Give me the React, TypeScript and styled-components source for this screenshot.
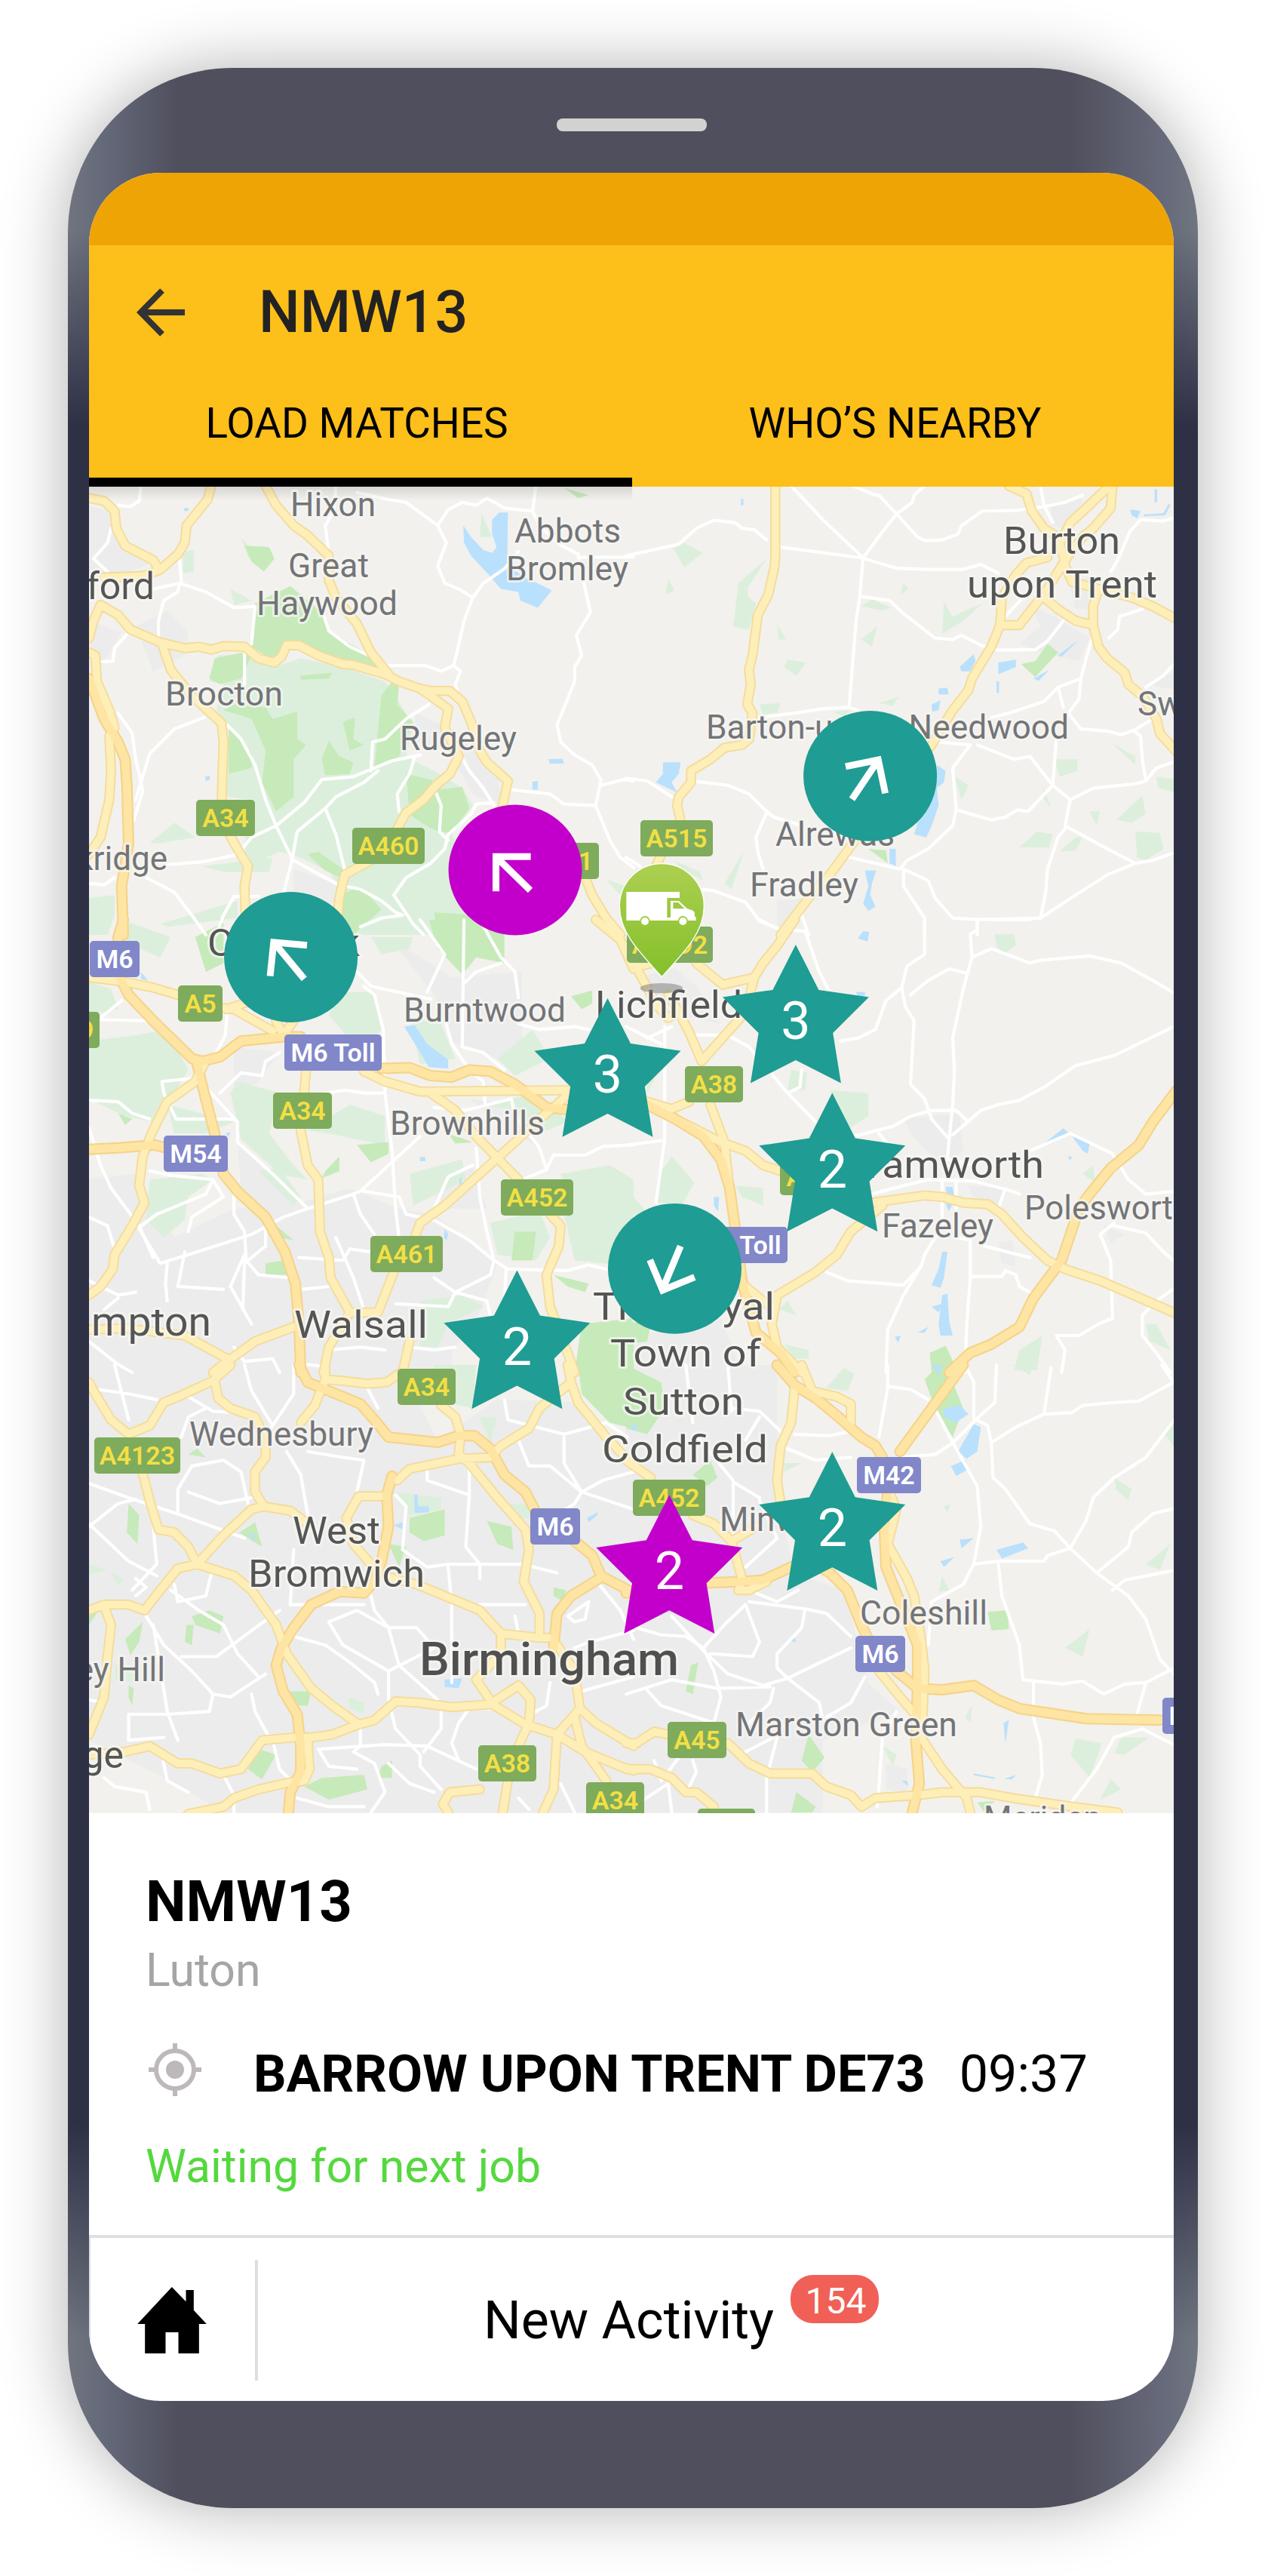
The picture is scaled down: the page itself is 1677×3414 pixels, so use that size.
import React from 'react';
import styled, { createGlobalStyle } from 'styled-components';

const GlobalStyle = createGlobalStyle`
  * { box-sizing: border-box; }
  body { margin: 0; background: #fff; font-family: Roboto, "Noto Sans", sans-serif; }
`;

/* ---------- device ---------- */

const Page = styled.div`
  display: flex;
  align-items: flex-start;
  width: 1677px;
  height: 3414px;
  padding: 90px 0 0 90px;
  overflow: hidden;
`;

const Phone = styled.div`
  display: flex;
  flex-direction: column;
  align-items: center;
  width: 1498px;
  height: 3234px;
  border-radius: 218px;
  background:
    linear-gradient(to bottom, rgba(46, 48, 69, 0) 215px, #2e3045 475px, #2e3045 calc(100% - 510px), rgba(46, 48, 69, 0) calc(100% - 225px)),
    linear-gradient(to right, #70757f 0, #646979 50px, #504f5d 145px, #504f5d calc(100% - 170px), #676a7a calc(100% - 45px), #6f7680 100%);
  box-shadow: 0 0 88px rgba(0, 0, 0, 0.31);
`;

const Speaker = styled.div`
  width: 199px;
  height: 17px;
  margin: 67px 4px 55px 0;
  border-radius: 8px;
  background: #d2d2d2;
  flex: none;
`;

const Screen = styled.div`
  display: flex;
  flex-direction: column;
  width: 1438px;
  height: 2953px;
  margin-right: 4px;
  border-radius: 95px;
  overflow: hidden;
  background: #fff;
`;

/* ---------- header ---------- */

const StatusBar = styled.div`
  height: 96px;
  background: #eea404;
  flex: none;
`;

const AppBar = styled.header`
  display: flex;
  align-items: center;
  height: 178px;
  padding-left: 63px;
  gap: 98px;
  background: #fdbf19;
  flex: none;
`;

const Title = styled.h1`
  margin: 0;
  font-size: 77px;
  line-height: 90px;
  font-weight: 500;
  color: #222;
`;

const Tabs = styled.nav`
  display: grid;
  grid-template-columns: 720px 718px;
  height: 142px;
  background: #fdbf19;
  flex: none;
`;

const Tab = styled.div<{ $active?: boolean }>`
  display: flex;
  align-items: center;
  justify-content: center;
  padding: 0 ${p => (p.$active ? 10 : 21)}px 14px 0;
  border-bottom: 12px solid ${p => (p.$active ? '#000' : '#fdbf19')};
  font-size: 54.8px;
  line-height: 64px;
  color: #000;
`;

/* ---------- map ---------- */

const MapView = styled.div`
  height: 1758px;
  flex: none;
  background: #f2f1ed;
`;

type Tile = {
  x: number; y: number;
  urban: string; park: string; wood: string; water: string;
  lane: string; main: string; motor: string;
};

const SX = 0.46556;
const SY = 0.38265;

const TILES: Tile[] = [
  {
    x: -8, y: -6,
    urban: '17,80 90,110 130,230 200,280 100,320 17,330|150,500 240,445 300,520 290,600 200,655|945,800 1040,850 1180,1000 1190,1120 1110,1080 1040,930 950,900|20,480 110,520 50,640 20,640|600,1340 720,1390 730,1440 660,1500 600,1430',
    park: '385,600 480,595 545,640 620,610 740,640 860,690 900,760 940,850 920,950 1000,1000 1080,1060 1110,1120 1050,1220 1130,1450 1130,1568 770,1568 730,1400 700,1350 620,1300 560,1280 470,1330 460,1250 480,1100 410,1090 415,850 380,790 400,700 360,690|285,240 315,235 315,310 285,315|1490,1375 1568,1410 1568,1430 1530,1430|190,1250 260,1180 320,1230 220,1250|340,1330 540,1300 530,1350 400,1350|17,1440 90,1430 90,1500 70,1568 17,1568|220,1530 440,1450 440,1510 240,1540|1135,110 1165,190 1130,190|450,195 480,230 475,270|420,370 480,410 430,425',
    wood: '490,420 590,360 680,450 700,520 820,600 850,640 740,625 620,560 570,565 545,620 480,570|375,610 455,590 480,600 450,680 390,700 360,680|400,790 430,770 520,780 540,820 610,795 610,890 635,910 600,960 600,1090 550,1140 510,1040 520,930 480,820|415,840 480,940 480,990 415,1010|740,830 775,815 770,890 800,910 760,930|700,895 730,950 770,970 760,1010 690,1015 680,960|850,740 880,690 900,700 895,770 940,830 900,950 830,990 840,860|920,1010 990,1030 1020,1065 1080,1055 1100,1130 1050,1215 1010,1210 970,1185 930,1150|640,1290 670,1280 740,1340 735,1370 690,1345|730,1430 790,1400 850,1480 770,1568 730,1568|1000,1490 1130,1500 1130,1568 1010,1568|460,220 530,225 545,265 515,310 480,275|1370,20 1440,45 1410,55|620,670 710,660 700,680 620,685',
    water: '1083,150 1105,190 1140,235 1165,245 1178,225 1165,180 1165,130 1185,105 1210,105 1208,290 1260,330 1335,375 1295,435 1245,410 1240,380 1190,370 1155,320 1105,255 1085,210|1325,960 1365,958 1370,975 1330,975|1280,1038 1295,1035 1295,1065 1280,1065|288,90 300,90 300,100 288,100|348,1020 362,1018 360,1032 350,1034',
    lane: '165,13 160,65 135,85 100,80|80,160 70,210 30,265 70,310|280,345 275,270|200,370 275,350 350,380 430,435 490,430 480,560|275,350 270,380 230,410 215,480 215,550|130,520 90,575 85,620 55,622|720,13 715,100 690,150 700,250|780,35 870,60 920,70 1010,150 1035,210 1010,290 1030,350 1070,370 1110,400|1010,150 1040,95 1080,70 1120,80 1150,55 1200,90 1280,100 1290,13|1280,100 1300,150 1350,210 1410,250 1430,370 1445,450 1405,530 1420,600 1400,640 1400,690 1370,780 1350,840 1360,900 1400,945 1450,980 1475,1030 1460,1120|1410,260 1568,260|1240,240 1200,300 1140,350 1110,400 1085,480 1065,590 1055,635 1020,655 975,635 870,635|1055,635 1075,655 1060,700 1065,720|680,440 700,515 760,570 850,620|460,590 460,700|345,815 260,855 190,940 150,1100|100,800 140,870 150,960 160,1010 170,1070 145,1170|410,840 450,890 490,980 520,1100 550,1190 590,1290 600,1310 720,1390|985,770 920,820 860,890 825,900 820,1000|960,945 880,965 770,1020 680,1030 630,1110 550,1190 480,1230 440,1290 340,1315 240,1325|840,1000 800,1040 720,1090 690,1130 610,1210 595,1310 570,1430|690,1130 720,1220 745,1340|945,950 930,1010 895,1080 900,1140|1075,945 1100,1000 1140,1060 1170,1120|1215,1065 1330,1080 1370,1115 1460,1120 1500,1240 1530,1300 1568,1335|1475,1050 1540,1030 1568,1035|1005,1075 1020,1120 1015,1210 1040,1240|1170,1110 1120,1115 1105,1150 1040,1220 1030,1270 990,1320 920,1370 885,1430 940,1530 970,1568|180,1370 260,1420 310,1500 350,1568|430,1435 500,1435|430,1435 400,1500 380,1568|750,1400 790,1410 850,1450 890,1490 910,1500 850,1510 790,1540|20,1390 60,1395 90,1370',
    main: '17,55 60,65 90,100 95,160 120,220 200,270 218,305|365,13 355,60 295,150 290,210 270,250 218,305 170,325 60,330|520,13 550,80 600,150 640,185 700,255 700,340 720,400 780,490 820,590 870,665|17,540 30,480 50,425 100,460 135,510 220,555 290,575 330,570 365,580 400,568 460,570 500,610 545,625 565,605 580,565 615,565 670,600 740,630 770,633 860,665 900,690 960,715 990,740 1040,785 1030,850 1070,950 1045,1010 1005,1050 970,1100 920,1145 895,1200 850,1290 745,1360 730,1440 725,1500|960,715 990,723 1045,723 1080,760 1105,830 1130,930 1150,970 1210,1035 1195,1120|225,560 250,650 310,740 395,835 400,900 395,1100 400,1180 430,1250 470,1330 460,1400 465,1568|17,590 35,600 40,690 75,790 90,850 75,880 80,1000 75,1100 50,1230 17,1290|1430,1370 1450,1430 1490,1510 1530,1568',
    motor: '17,680 60,820 100,900 120,960 125,1050 130,1250 110,1400 115,1568',
  },
  {
    x: 712, y: -6,
    urban: '1210,80 1290,50 1310,90 1250,160 1210,150|1150,420 1240,480 1320,540 1290,620 1220,600 1120,560 1180,500|1480,700 1568,650 1568,720|1260,340 1330,330 1330,440 1280,440|430,1450 520,1440 470,1568 430,1568',
    park: '135,230 165,210 218,245 165,295|120,335 138,375 112,390|400,265 345,370 350,400 370,420 350,510 305,500 320,350|430,490 455,545 435,545|450,640 460,615 512,625 485,670|670,430 700,405 755,435 730,445|670,545 715,500 700,570|790,350 805,370 780,390|905,415 930,465 1015,420 960,480 900,525|720,765 775,745 760,775|380,770 440,765 430,800 390,805|1220,960 1285,960 1285,1000 1235,1020|935,1020 975,1050 955,1100|1385,905 1450,950 1450,980|1320,1140 1350,1140 1340,1190|1395,1170 1470,1085 1480,1150 1440,1180|1450,1210 1520,1215 1530,1270 1480,1310 1455,1300|1120,1265 1170,1210 1215,1220 1205,1265|1235,1280 1280,1230 1300,1230 1280,1275|1510,1020 1568,1030 1568,1075 1515,1060|335,1280 300,1410 280,1390|135,1310 210,1350 220,1380 160,1340|1190,1060 1210,1130 1185,1090|590,795 640,790 620,810',
    wood: '1125,630 1165,620 1200,560 1230,590 1165,675|690,1270 740,1275 745,1320',
    water: '105,970 155,970 150,1010 130,1040 145,1075 85,1040 105,1010|950,640 990,595 995,620 980,655 955,655|1060,625 1110,615 1110,640 1060,665|890,715 915,712 918,735 890,735|870,770 895,755 890,790 872,795|885,980 910,1000 905,1040 885,1060 890,1120 870,1190 855,1230 820,1220 830,1180 870,1080|750,1270 768,1270 768,1330 750,1320|680,1345 712,1345 700,1390 695,1430 710,1470 690,1485 675,1460 690,1400|1435,95 1465,100 1455,125 1440,115|1475,112 1530,108 1545,75 1550,80 1535,115 1475,118|1055,690 1062,690 1062,730 1055,730|327,58 334,58 334,80 327,80|1505,25 1512,25 1512,70 1505,70|1160,680 1205,650 1175,688|1230,600 1290,545 1240,605',
    lane: '0,255 150,215 200,160 250,132 310,140 330,160 365,165 400,200|440,225 670,262 770,298 860,302 960,302 1010,285 1060,315|470,13 560,130 675,262 725,180 770,110 815,70 820,45 850,13|645,13 710,45 720,45 770,110 830,190 850,202 900,200 945,180 955,150 1015,100 1110,98 1190,85 1250,70 1300,45|675,262 665,400 655,480 635,780|665,395 750,410 790,455 880,540 930,545 955,530 1010,565 1060,582 1165,580 1200,550 1245,480|380,815 480,800 560,785 635,780 660,790|1180,13 1190,80 1215,140|1568,120 1530,135 1465,130 1435,170 1400,270 1380,310|1470,440 1405,465 1400,510 1375,540|1330,530 1310,610 1295,680 1230,710 1190,760 1090,800 1040,815|1295,680 1290,750 1260,800 1295,855 1370,862 1410,875 1445,860 1500,820|1230,710 1245,780|1568,620 1530,670 1480,710|1225,890 1215,1050 1145,1140 1115,1135 1080,1160 1040,1170 940,1135 930,990 980,910 890,900|1000,910 1105,960 1150,950 1215,1050 1265,1100 1250,1190 1370,1270 1450,1320 1500,1310 1568,1280|1265,1100 1330,1060 1450,1045 1480,1035 1470,960 1465,880 1445,860|1480,1035 1510,990 1568,965|940,1135 930,1190 860,1270 800,1310 780,1340 620,1295|1250,1200 1230,1230 1200,1340 1195,1420 1180,1510 1000,1515 930,1510 880,1440 860,1380 790,1340 790,1400 850,1510 850,1568|1450,1320 1370,1360 1280,1430 1180,1510|1000,1515 1000,1568|0,1025 60,1035 130,1090|190,1035 290,1050 350,1080 400,1140 420,1160 500,1190|400,1145 370,1230 375,1280 390,1340|0,1300 40,1330|210,1410 250,1415 340,1455 380,1520 460,1560|1060,490 1130,400|500,1500 520,1568',
    main: '425,13 425,250 423,290 405,390 375,460 360,600 350,650 355,700 345,770 360,800 350,890 330,910 280,920 240,960 185,1000 185,1040 150,1090 145,1120 155,1170|100,1290 85,1330|1090,13 1140,40 1155,100 1190,160 1230,190 1250,280|1370,20 1310,90 1265,140 1240,200|1385,13 1380,90 1330,160 1300,190 1250,270 1200,370 1120,495 1065,495|1200,260 1140,280 1110,320 1070,400 1065,495 1040,570 1015,620 985,680 975,720 930,790 870,910 640,1260 580,1360 520,1440 440,1568|1190,400 1230,440 1280,480 1330,495 1330,430 1345,370|1250,290 1270,345 1345,370 1440,400 1500,430 1568,475|1330,495 1345,570 1370,610 1420,660 1430,700 1470,740 1510,820 1520,870 1568,935',
    motor: '',
  },
  {
    x: -8, y: 574,
    urban: '17,900 150,880 260,1100 430,1000 620,980 760,930 900,1000 1000,1020 1180,1190 1130,1360 1050,1500 1050,1568 17,1568|870,60 1050,200 1250,180 1250,480 1170,480 1050,420 1000,260|1100,620 1230,640 1300,790 1180,700|430,440 560,460 500,560 430,620|620,0 760,200 700,60|440,760 620,980 560,1040 450,940|990,880 1110,860 1150,1000 1010,1000',
    park: '17,420 150,400 240,380 300,520 240,640 200,700 120,680 17,620|17,215 80,240 100,310 17,330|110,0 250,60 220,130 120,80|240,640 430,700 350,740 260,740|190,900 340,880 370,900 300,960 290,1040 230,1100 180,1040|440,560 560,600 530,740 600,850 640,900 560,880 450,760 420,600|640,730 760,640 860,680 860,780 700,740|730,250 830,250 850,380 790,460 700,330|930,340 1020,360 1060,480 960,500|1180,480 1280,380 1330,480 1230,540|1130,640 1300,600 1380,700 1300,740 1230,660|930,880 1080,830 1090,900 940,990|1360,880 1500,850 1568,900 1568,1200 1400,1180 1370,1020 1400,1010|1160,1050 1300,1010 1330,1100 1290,1180 1180,1160|960,1320 1080,1300 1140,1340 1040,1400 1010,1480 960,1480|820,60 940,60 930,100 850,120|770,0 960,0 900,20 800,40|1240,1400 1310,1390 1340,1568 1240,1568|500,870 560,860 620,960 600,990',
    wood: '320,60 400,10 400,150 350,180|985,0 1200,0 1200,150 1120,130 1080,190 1010,100|780,780 870,770 870,810 820,840|690,870 730,820 730,870 680,895|520,1190 570,1180 580,1230 520,1230|1390,265 1450,245 1450,290 1420,310|550,1060 600,1110 560,1100|1230,1080 1290,1080 1280,1180 1220,1180|1420,1400 1568,1380 1568,1568 1400,1568|100,670 140,690 120,710|1040,740 1110,770 1060,775|1340,1230 1440,1260 1430,1290 1380,1270',
    water: '915,370 945,365 980,430 1040,485 1040,515 985,510 950,440|960,822 975,822 975,836 960,836|1030,1070 1040,1090 1035,1110 1028,1100|165,180 185,210 165,205|405,740 420,735 415,752|1072,895 1078,895 1078,920 1072,920',
    lane: '410,330 405,400 380,460|17,625 100,630 140,670 190,690|17,345 190,350 240,380|50,340 110,280|350,580 440,700 440,770 540,880 640,1000|560,460 520,490 510,540 450,530 390,600|310,550 225,560 230,600 265,690 430,690|690,600 750,590 800,600 860,600|800,230 830,260 855,380 860,600 880,800 890,1000 900,1100|780,180 820,230 990,275|960,0 1030,120 980,250|1085,0 1080,440 1140,460 1200,520|1130,0 1190,130 1230,180 1240,270|1190,150 1120,180 1085,220|1030,340 1050,430 1100,520 1140,560 1145,640|1000,650 1090,660 1220,620 1230,680 1300,790 1320,865 1340,815 1430,815 1480,785 1568,780|1320,865 1250,900|960,750 790,940 770,950 640,1000 570,1030 480,1090 300,1160 220,1190 160,1070|800,940 900,960 920,1020 1000,1040 1100,1110 1170,1180 1210,1210 1380,1215 1440,1195 1490,1210|770,950 790,1020 830,1090|1120,790 1130,960 1150,1080 1170,1180 1160,1230 1060,1290 1000,1240|1110,850 1040,890 1000,1000|1205,1210 1200,1320|1060,1290 1150,1320 1160,1370|17,720 50,850 80,930 160,1060 200,1170|160,1065 210,1020 350,950 370,900 250,885 190,870|370,900 400,960 310,1030 300,1080|430,920 430,1020 460,1080 465,1180 500,1230 590,1240|17,1030 70,1060 90,1140|460,1160 420,1270 480,1400|460,1180 455,1350|520,1050 520,1130 460,1190|240,1190 235,1260 240,1320|17,1250 100,1300 150,1290|100,1310 60,1350|290,1150 270,1270 400,1280|615,1170 740,1180 760,1140 820,1150|720,1100 770,1240 800,1350|620,1280 700,1270|1060,1290 1040,1340 890,1330|17,1460 100,1540 140,1568|430,1480 460,1530 540,1520 560,1568|700,1490 790,1480 860,1490|640,1540 700,1550|930,1480 1000,1490 1060,1480|1240,360 1300,380 1400,370 1440,380',
    main: '20,200 120,215 200,235 270,260|395,305 430,310 540,385|410,310 500,270|550,350 570,400 600,350|345,500 320,560 240,630 195,740 170,820 160,920 175,980 140,1060 90,1160 85,1210 50,1270 17,1300|635,520 630,600 620,730 640,850 670,900 675,1080 700,1170 705,1240 760,1360|990,600 1060,660 1120,750 1180,825 1240,900|1400,580 1350,640 1300,690 1230,770 1180,825 1030,990 960,1050 945,1100|885,1220 840,1360 760,1360 700,1480 685,1568|1330,1020 1360,1060 1355,1130 1320,1230 1330,1340 1380,1500 1400,1568|600,1410 490,1460 410,1530 370,1568|410,1520 290,1440 120,1415 17,1420|930,1460 910,1568|1460,0 1530,70 1568,170|800,525 860,560 960,595 1400,590|465,0 465,60',
    motor: '115,0 100,60 105,200 130,260 200,350 310,480 340,490 390,475 450,420 575,405 620,405|325,500 345,600 375,740 400,880 440,940 520,1030 575,1150 605,1260 615,1400 620,1568|17,795 100,790 205,780 235,790|850,515 930,512 990,540 1050,545 1100,520 1160,525 1230,570 1320,650 1400,660 1568,600',
  },
  {
    x: 712, y: 574,
    urban: '790,690 950,670 960,800 900,860 810,740|60,190 140,170 200,230 270,360 150,330 60,220|1060,1120 1100,1110 1110,1200 1070,1190|0,1450 270,1380 330,1568 0,1568|970,920 1080,930 1060,1010 990,960|1360,1060 1420,1090 1380,1120',
    park: '1050,50 1105,50 1110,90 1080,115 1055,95|580,590 690,600 690,680 640,720 590,650|100,870 130,820 195,910 160,985 90,980|310,920 390,930 390,990 330,960|470,520 515,530 510,590 460,590|435,1350 460,1320 485,1370|450,1470 520,1490 520,1520 480,1520|1105,1560 1120,1490 1185,1440 1170,1560|1480,1400 1510,1400 1550,1490 1490,1460|1300,880 1330,850 1335,910|0,930 50,1000 50,1050 0,1000|60,500 90,530 60,600|350,440 380,450 370,480',
    wood: '865,1500 910,1475 935,1540 930,1568 870,1568|0,1390 70,1400 60,1460 0,1470',
    water: '660,65 675,40 692,42 688,75|655,250 680,250 680,270 660,270|1195,770 1245,722 1265,745 1210,775|1270,750 1320,770 1315,810 1300,800|900,1150 915,1150 905,1240 895,1275 870,1265 890,1210|900,1300 915,1295 920,1390 930,1440 895,1440 890,1400|870,1340 900,1330 890,1360|830,1430 860,1410 850,1430|910,925 930,925 935,975 915,975|250,960 265,960 262,1010 250,990|765,1445 782,1440 775,1465|910,980 930,985 918,1010|1258,820 1270,820 1264,835',
    lane: '850,0 850,120 800,160 785,235 740,280 710,380 660,410 610,420|785,235 795,300 820,350 810,570 850,620 870,690 920,760 930,640 935,520 930,410 960,240 985,130 980,50 1000,35 1000,0|970,185 920,170 860,210 810,260|985,130 1040,100 1150,150 1180,140 1320,125 1410,150 1500,210 1568,260|1568,365 1390,470 1280,505 1190,580 1120,625 1060,640 1010,660 930,745|650,750 760,715 810,680 870,660 940,660 970,695|920,760 915,830 990,850|700,950 760,930 860,900 990,905 1100,940 1120,950|1080,930 1060,1000|900,900 900,1060 850,1160 840,1200 790,1300 745,1420 740,1568|980,1110 980,1240 970,1400 965,1568|980,1235 1070,1235 1080,1215 1110,1230 1120,1270 1150,1290|1150,800 1265,740 1385,810 1430,900 1480,950 1568,940|1390,1050 1350,1090 1380,1180 1385,1380 1345,1400 1290,1440 1225,1440 1250,1490 1240,1568|1390,1060 1480,1085 1530,1150 1568,1190|1568,1270 1510,1320 1470,1370 1470,1440 1510,1500 1550,1568|570,1220 630,1250 790,1265 840,1200|190,398 290,400 350,440 460,600 540,700|380,0 430,30 510,40 550,180 575,240|110,370 110,760 85,980|0,370 100,430|130,370 60,410|0,780 100,765|500,520 495,580 460,600|1040,0 1150,0|940,900 940,1100 980,1110|1020,1130 1150,1170|720,740 760,800',
    main: '480,0 430,90 390,150 365,200 275,225 200,150|365,200 340,320 215,490 180,390 150,320 120,340 90,300 40,190 0,90|20,165 75,150|60,630 130,655 180,630|240,640 280,770 295,940 310,1060 325,1100|60,640 270,770 340,800 390,850 440,870|700,980 760,970 850,955 900,960 960,980 1030,985 1070,1020 1130,1100 1200,1180 1250,1210 1350,1250 1568,1365|730,990 640,1080 600,1160 540,1220 430,1300 415,1400 430,1480 500,1568|340,1270 420,1350|150,320 120,260',
    motor: '0,600 60,640 140,690 220,750 270,830 295,930 310,1060 330,1250 345,1320 370,1430 440,1500 480,1568|1568,590 1500,700 1460,780 1380,860 1320,950 1290,1000 1240,1180 1160,1310 1120,1410 1040,1470 980,1500 920,1568',
  },
  {
    x: -8, y: 1164,
    urban: '17,0 900,0 1010,260 1180,120 1420,130 1568,350 1568,1550 400,1550 250,1440 17,1300',
    park: '1000,0 1120,0 1110,150 1000,120|880,440 1020,460 1020,500 930,520|755,1150 800,1170 800,1210 760,1190|1130,180 1180,180 1160,270|17,690 70,710 17,725|80,720 115,740 100,765|90,1040 150,1040 150,1100 90,1090|1210,480 1270,480 1280,530 1230,530',
    wood: '930,530 1030,500 1030,590 970,610 930,580|1150,540 1220,560 1225,640 1180,620|445,580 490,545 510,630|130,480 160,520 155,620 125,580|310,870 360,850 400,870 390,930 320,900|295,900 315,900 310,970 290,960|120,950 170,890 160,960 135,1005|870,620 920,630 900,700|590,1130 650,1130 640,1180 600,1180|630,1460 680,1430 800,1420 810,1470 700,1505|850,1390 880,1370 880,1430 840,1430|470,1400 500,1330 550,1350 510,1435|300,310 325,290 350,320|1340,770 1375,780 1370,820 1340,800|1410,0 1568,0 1568,220 1500,200 1420,100|17,850 45,850 17,900|130,1110 145,1120 140,1180 130,1150',
    water: '943,448 952,448 955,490 985,490 985,510 945,512|1030,1090 1080,1085 1070,1120 1030,1115|885,555 910,545 910,570|1435,530 1465,510 1465,520 1440,545|470,580 490,590 485,610',
    lane: '17,80 130,100 210,120|90,0 130,190|300,110 370,160 430,165|350,150 300,180 280,250|460,0 480,90 540,210|600,0 600,100 540,210 510,260|580,300 620,380 640,520|640,300 740,320 800,330 780,440|17,410 130,460 280,520 460,600|17,560 100,480 150,465|270,510 270,430 310,350 400,330 450,370 470,480|17,550 130,680 210,730|300,440 390,480 480,460|810,80 840,150|1200,120 1210,190 1370,240 1490,200 1550,250|1370,250 1370,340 1420,440 1400,480 1300,560|1240,260 1270,350 1330,350 1420,440 1568,500|1420,440 1480,400 1568,370|980,350 980,400 1100,450 1090,630 1130,690 1130,740|1100,340 1100,450|890,450 920,490 910,640 980,700 1040,690 1250,690 1350,720|1040,700 1050,830 1050,1100|640,850 600,940 690,970 760,1030 830,1100 840,1140|700,890 780,850 870,910 950,910 1000,980 870,1060 870,1160|700,890 740,970 870,1060|820,800 830,850 870,910 900,1040 1010,1160|560,850 480,920 380,1010 280,1010|250,780 330,850 400,900 440,1000 500,1080|180,870 230,970 310,1060 370,1140 420,1150 520,1070|370,1140 360,1200 240,1210 130,1210 130,1300 230,1290|480,1140 490,1200 530,1290|200,900 240,1200 270,1300|140,780 210,690 200,560|370,700 350,800 270,820 260,760|600,640 590,830 700,830 800,830|17,1160 60,1170|60,1430 90,1460 180,1480 190,1540|225,1350 240,1440 300,1480|400,1420 430,1490 430,1550|540,1300 560,1400 600,1450|790,1250 790,1320 770,1340 830,1380 860,1480 820,1550|670,1330 700,1390 780,1400|680,1330 860,1315 980,1320 1120,1400|870,1160 890,1260 960,1350 960,1390 1020,1470|1020,1180 1020,1260 970,1340|1160,1190 1100,1190 1070,1240 1050,1310 1070,1370|610,1500 700,1530 800,1530|870,1380 930,1450 1000,1480|1420,1130 1568,1080|1330,1100 1320,1180 1290,1200|1260,830 1130,830|1230,870 1240,930|1440,820 1380,870 1400,890 1430,880 1440,820|1470,760 1530,850 1568,950|1400,980 1440,960 1568,920|1360,1450 1400,1550|1240,1500 1270,1540|150,740 180,770 150,800',
    main: '420,0 370,55 280,105 230,130 190,210 130,240 80,190 40,110 17,60|375,55 385,115 420,150 490,180 520,260 520,320 490,370 490,440 515,490 590,505 640,550|170,375 190,470 215,570 260,580 300,630 325,690|515,490 480,500 400,590 325,690 270,705 220,780 175,850 130,830 60,830 17,850|60,835 80,900 70,1010 60,1150 17,1280|325,690 430,730 480,780 550,900 580,1000 650,1120 710,1180 785,1245|17,1350 120,1340 190,1320 230,1350 270,1380 310,1380 390,1415 450,1400 510,1300 600,1290 650,1290 710,1280 785,1245 830,1230 890,1165 960,1170 1050,1185 1165,1175 1260,1245 1350,1280 1430,1340 1530,1390 1568,1405|610,1440 500,1470 430,1500 400,1530 300,1555|640,1300 645,1400 630,1440 590,1450|690,0 690,50 740,55 810,65 865,60 900,30|690,50 660,140 620,200|1020,140 1060,180 1075,240 1070,310 1100,340 1180,460 1260,570 1270,640 1255,750 1300,860 1300,940|895,400 930,360 1070,325 1160,320 1190,280 1270,220 1300,150 1390,60 1380,0|860,455 785,455 750,530 770,620 820,690|950,760 1040,805 1130,850 1190,930 1300,945 1330,945|870,735 950,760|1190,930 1190,1000 1120,1090 1165,1170 1240,1110 1275,1160 1270,1240 1240,1320|1210,1440 1195,1550|1130,1470 1045,1480 1025,1520 1040,1550|1350,1280 1340,1470 1310,1550|1350,970 1400,1060 1415,1190 1350,1280|1415,1190 1460,1240 1568,1320|1400,1220 1420,1320 1490,1440|1390,60 1410,130 1490,250 1568,350',
    motor: '615,0 640,60 730,105 790,135 830,190 870,250 1010,268 1070,245 1115,245 1160,290 1200,380 1260,440 1290,510 1400,610 1450,660 1475,730 1568,790|880,385 865,450 870,560 850,680 830,750 800,790 730,785 650,830 600,910 565,980 550,1040 570,1130 610,1210 620,1320 620,1410 590,1480 585,1550|1340,980 1350,860 1390,800 1470,740',
  },
  {
    x: 712, y: 1164,
    urban: '0,0 430,0 430,450 480,720 620,780 690,1100 780,1200 560,1300 560,1550 0,1550|740,1380 800,1400 800,1480 740,1470',
    park: '570,80 620,10 650,30 630,90|1100,0 1160,0 1150,35|450,340 500,340 450,370|1390,390 1440,430 1430,470 1395,430|1440,380 1475,340 1450,370|905,490 925,480 915,510|1480,690 1550,620 1520,710|1250,980 1320,915 1300,1010|1280,1295 1355,1310 1320,1430 1265,1350|1390,1345 1410,1290 1490,1290 1420,1350|1350,1505 1380,1435 1410,1470|900,730 920,780 890,785|965,1220 985,1180 980,1240|730,1320 770,1350 760,1390|1535,240 1568,180 1568,300',
    wood: '0,0 100,60 110,150 60,240 0,220|1030,855 1085,850 1090,915 1040,920|520,1280 565,1360 530,1410 500,1370|185,1040 205,1030 190,1140 170,1130|485,1480 540,1530 530,1550 470,1550|850,50 890,0 930,60 960,150 930,250 890,180|190,380 240,330 260,390 230,420|1000,1515 1050,1510 1020,1550',
    water: '905,150 950,140 975,170 940,200 905,180|990,205 1010,215 1000,300 970,325 945,300|925,350 965,330 975,360 940,385|1055,640 1130,615 1145,635 1070,670|950,605 990,600 955,635|895,680 935,665 905,700|465,955 475,935 485,960|785,1440 800,1440 805,1460|1075,1240 1090,1230 1080,1310|990,1415 1050,1428 1050,1434 990,1421|1075,1435 1110,1420 1100,1435|870,0 900,0 890,35|10,210 40,210 20,228',
    lane: '745,0 745,80 720,250|750,75 810,85 860,120|480,240 580,245 640,230|460,290 540,330 640,320|1055,0 1050,130 1000,185 930,270 880,310 780,320|965,0 990,60 990,185 1030,210 1040,270 1045,390 1080,430 1150,550 1220,575 1265,635 1340,720 1430,800 1480,880 1520,1020 1568,1080|1045,265 1110,215 1190,170 1270,165 1300,140 1390,130 1460,125 1560,60|1190,170 1210,10|1525,0 1568,75|1568,180 1480,320 1390,390 1330,460 1310,540 1265,635 1200,660 1190,680 1060,680 990,690 1010,560 1000,420 940,290 870,130|1568,495 1500,515 1440,580 1430,630 1340,720|1568,710 1420,745 1385,780|990,690 960,760 870,820 860,970|1060,690 1070,800 1120,970 1130,1090 1240,1105 1270,1100 1300,1095 1360,1140 1420,1105 1480,1100 1568,1045|1160,1095 1160,1220 1180,1310 1185,1420 1165,1500|1480,1100 1455,1210|1568,1320 1470,1260 1390,1290 1340,1400 1270,1510|170,0 190,200|290,0 300,160|210,260 305,400 305,600|305,405 380,460|300,150 380,160 440,230|380,180 340,260|130,870 220,990 290,1070 390,1110 460,1085 640,980|0,900 100,935 170,940 220,980|340,830 280,900 220,980 250,1060 270,1150 250,1240|350,820 510,845 570,860 640,940|510,845 500,910 430,1000 430,1050 460,1085 550,1170 560,1230|340,830 380,960 360,1010 240,1000|0,1140 130,1090 260,1120 410,1115|55,1120 100,1180 250,1240|680,1080 640,1170 570,1220|420,1120 410,1170 350,1240|430,1290 400,1430 400,1550|770,1200 730,1290 720,1460 715,1530|370,790 430,820 490,780|380,470 430,600 340,700|150,1360 100,1440 80,1370|190,1370 200,1410 180,1460|20,1530 120,1450 130,1550|340,1340 420,1290',
    main: '500,0 530,90 600,110 640,135 640,200|480,80 470,200 440,280 430,400 440,480|0,330 70,390|190,520 250,550 300,610 330,740 320,780 350,780 400,750|300,610 370,560|750,440 770,500 745,620 800,740 820,800 840,950 850,1060 845,1200 840,1290 900,1400 970,1500 980,1550|0,1310 30,1310 80,1270 120,1280|290,1310 350,1380 410,1415 530,1415 570,1460 640,1490 670,1530 710,1500 830,1490 900,1480 1010,1480 1100,1500 1270,1530 1400,1550|0,1400 70,1400 130,1430 170,1480 200,1480 250,1530|720,1060 780,1150 830,1220',
    motor: '430,0 480,70 540,115 600,175 670,250 710,280 740,340 745,440 735,560 740,700 790,850 830,970 830,1100 825,1300 835,1450 815,1550|960,0 870,150 780,300|0,790 80,780 230,755 330,750 390,745 470,700 520,680 580,720 630,780 670,900 690,950 770,1060 830,1120 900,1125 990,1110 1060,1160 1120,1190 1310,1225 1520,1230',
  },
];

const toPath = (lines: string, closed: boolean) =>
  lines.split('|').filter(Boolean).map(l => `M${l.trim().split(' ').join('L')}${closed ? 'Z' : ''}`).join('');

const Area = styled.path<{ $fill: string }>`
  fill: ${p => p.$fill};
`;

const Road = styled.path<{ $color: string; $width: number }>`
  fill: none;
  stroke: ${p => p.$color};
  stroke-width: ${p => p.$width}px;
  stroke-linejoin: round;
  stroke-linecap: round;
  vector-effect: non-scaling-stroke;
`;

type Layer = { key: keyof Omit<Tile, 'x' | 'y'>; color: string; width?: number };

const LAYERS: Layer[] = [
  { key: 'urban', color: '#ececec' },
  { key: 'park', color: '#dcefdc' },
  { key: 'wood', color: '#c6eab9' },
  { key: 'water', color: '#b9e0fd' },
  { key: 'lane', color: '#ffffff', width: 4.2 },
  { key: 'main', color: '#f4db9a', width: 13.5 },
  { key: 'motor', color: '#f5d38a', width: 15 },
  { key: 'main', color: '#feeeb8', width: 9.8 },
  { key: 'motor', color: '#fee5a3', width: 10.8 },
];

type Place = {
  text: string; x: number; y: number; size?: number; w?: number;
  anchor?: 'start' | 'middle' | 'end'; color?: string; weight?: number;
};

/* x, baseline y and drawn width, in map pixels */
const PLACES: Place[] = [
  { text: 'Hixon', x: 267, y: 39, w: 113, anchor: 'start' },
  { text: 'Abbots', x: 564, y: 74, w: 141, anchor: 'start' },
  { text: 'Bromley', x: 553, y: 124, w: 162, anchor: 'start' },
  { text: 'Great', x: 264, y: 120, w: 107, anchor: 'start' },
  { text: 'Haywood', x: 222, y: 170, w: 187, anchor: 'start' },
  { text: 'Stafford', x: 87, y: 149, size: 50, anchor: 'end', color: '#555' },
  { text: 'Brocton', x: 101, y: 290, w: 156, anchor: 'start' },
  { text: 'Rugeley', x: 412, y: 349, w: 155, anchor: 'start' },
  { text: 'Penkridge', x: 104, y: 508, anchor: 'end' },
  { text: 'Burton', x: 1212, y: 89, w: 155, anchor: 'start', size: 50, color: '#555' },
  { text: 'upon Trent', x: 1164, y: 147, w: 252, anchor: 'start', size: 50, color: '#555' },
  { text: 'Barton-under-Needwood', x: 818, y: 334, w: 481, anchor: 'start' },
  { text: 'Swadlincote', x: 1390, y: 303, anchor: 'start' },
  { text: 'Alrewas', x: 910, y: 476, w: 158, anchor: 'start' },
  { text: 'Fradley', x: 876, y: 543, w: 144, anchor: 'start' },
  { text: 'Cannock', x: 157, y: 622, w: 202, anchor: 'start', size: 50, color: '#555' },
  { text: 'Burntwood', x: 417, y: 709, w: 215, anchor: 'start' },
  { text: 'Lichfield', x: 671, y: 704, w: 195, anchor: 'start', size: 50, color: '#555' },
  { text: 'Brownhills', x: 399, y: 859, w: 205, anchor: 'start' },
  { text: 'Tamworth', x: 1022, y: 916, w: 244, anchor: 'start', size: 50, color: '#555' },
  { text: 'Polesworth', x: 1240, y: 971, w: 221, anchor: 'start' },
  { text: 'Fazeley', x: 1051, y: 995, w: 148, anchor: 'start' },
  { text: 'mpton', x: 3, y: 1125, w: 159, anchor: 'start', size: 51, color: '#555' },
  { text: 'Walsall', x: 272, y: 1128, w: 177, anchor: 'start', size: 50, color: '#555' },
  { text: 'The Royal', x: 668, y: 1104, w: 241, anchor: 'start', size: 50, color: '#555' },
  { text: 'Town of', x: 691, y: 1166, w: 200, anchor: 'start', size: 50, color: '#555' },
  { text: 'Sutton', x: 708, y: 1230, w: 160, anchor: 'start', size: 50, color: '#555' },
  { text: 'Coldfield', x: 680, y: 1293, w: 220, anchor: 'start', size: 50, color: '#555' },
  { text: 'Wednesbury', x: 133, y: 1271, w: 244, anchor: 'start' },
  { text: 'West', x: 270, y: 1401, w: 116, anchor: 'start', size: 50, color: '#555' },
  { text: 'Bromwich', x: 211, y: 1458, w: 234, anchor: 'start', size: 50, color: '#555' },
  { text: 'Brierley Hill', x: 101, y: 1583, anchor: 'end' },
  { text: 'Stourbridge', x: 46, y: 1698, anchor: 'end', size: 50, color: '#555' },
  { text: 'Birmingham', x: 438, y: 1575, w: 344, anchor: 'start', size: 62, weight: 500, color: '#505050' },
  { text: 'Minworth', x: 836, y: 1384, anchor: 'start' },
  { text: 'Coleshill', x: 1022, y: 1508, w: 169, anchor: 'start' },
  { text: 'Marston Green', x: 857, y: 1656, w: 294, anchor: 'start' },
  { text: 'Meriden', x: 1186, y: 1780, w: 156, anchor: 'start' },
];

const PlaceName = styled.text<{ $size: number; $color: string; $weight: number }>`
  font-family: Roboto, sans-serif;
  font-size: ${p => p.$size}px;
  font-weight: ${p => p.$weight};
  fill: ${p => p.$color};
  stroke: rgba(246, 245, 242, 0.75);
  stroke-width: 6px;
  stroke-linejoin: round;
  paint-order: stroke;
`;

type Shield = { text: string; x: number; y: number; w: number; motorway?: boolean };

const SHIELDS: Shield[] = [
  { text: 'A34', x: 142, y: 415, w: 78 },
  { text: 'A460', x: 349, y: 452, w: 96 },
  { text: 'A51', x: 599, y: 472, w: 77 },
  { text: 'A515', x: 731, y: 442, w: 96 },
  { text: 'M6', x: 1, y: 602, w: 66, motorway: true },
  { text: 'A5', x: 118, y: 661, w: 59 },
  { text: 'A449', x: -82, y: 696, w: 96 },
  { text: 'M6 Toll', x: 259, y: 726, w: 129, motorway: true },
  { text: 'A34', x: 244, y: 803, w: 78 },
  { text: 'M54', x: 99, y: 860, w: 85, motorway: true },
  { text: 'A452', x: 546, y: 918, w: 96 },
  { text: 'A461', x: 373, y: 993, w: 96 },
  { text: 'A5192', x: 713, y: 583, w: 114 },
  { text: 'A38', x: 790, y: 768, w: 77 },
  { text: 'A5', x: 916, y: 891, w: 59 },
  { text: 'M6 Toll', x: 797, y: 981, w: 129, motorway: true },
  { text: 'A34', x: 409, y: 1169, w: 77 },
  { text: 'A4123', x: 7, y: 1260, w: 114 },
  { text: 'M6', x: 585, y: 1354, w: 66, motorway: true },
  { text: 'A38', x: 516, y: 1668, w: 77 },
  { text: 'A34', x: 659, y: 1717, w: 77 },
  { text: 'A452', x: 721, y: 1316, w: 96 },
  { text: 'M42', x: 1018, y: 1286, w: 85, motorway: true },
  { text: 'M6', x: 1016, y: 1523, w: 66, motorway: true },
  { text: 'A45', x: 767, y: 1637, w: 78 },
  { text: 'M6', x: 1423, y: 1605, w: 66, motorway: true },
  { text: 'A41', x: 807, y: 1752, w: 76 },
];

const ShieldText = styled.text<{ $motorway?: boolean }>`
  font-family: Roboto, sans-serif;
  font-size: 34px;
  font-weight: 600;
  fill: ${p => (p.$motorway ? '#fff' : '#f3df45')};
  text-anchor: middle;
`;

const TEAL = '#1f9c93';
const PURPLE = '#c300cb';

const STARS = [
  { x: 936.9, y: 606.9, n: 3, color: TEAL },
  { x: 687.5, y: 678, n: 3, color: TEAL },
  { x: 985.3, y: 803.6, n: 2, color: TEAL },
  { x: 567.4, y: 1038.5, n: 2, color: TEAL },
  { x: 985.3, y: 1279.2, n: 2, color: TEAL },
  { x: 769.3, y: 1336.2, n: 2, color: PURPLE },
];

const HEADINGS = [
  { x: 565, y: 508, color: PURPLE, head: '20.6,-17.7 -25.5,-17.7 -25.5,28.2', tail: '-25,-17 20,27' },
  { x: 267.6, y: 623.5, color: TEAL, head: '21.4,-15.8 -22.8,-19.7 -27.5,25.1', tail: '-22,-19 17.7,28.9' },
  { x: 1035.6, y: 383.4, color: TEAL, head: '-32.6,-12.5 10.7,-21.3 20,23', tail: '10,-20 -24.2,30.8' },
  { x: 776.5, y: 1036.3, color: TEAL, head: '-32.9,-11.5 -16,28.6 26.3,11.4', tail: '-16,27 7.7,-29.9' },
];

const Count = styled.text`
  font-family: Roboto, sans-serif;
  font-size: 70px;
  fill: #fff;
  text-anchor: middle;
`;

const Pointer = styled.polyline`
  fill: none;
  stroke: #fff;
  stroke-width: 9px;
  stroke-miterlimit: 8;
`;

function VanPin() {
  return (
    <g transform="translate(662 474) scale(0.3333)">
      <ellipse cx="291" cy="572" rx="85" ry="20" fill="#777" fillOpacity="0.5" />
      <path d="M292 77A168 168 0 0 1 460 245C460 345 395 415 292 527C190 415 124 345 124 245A168 168 0 0 1 292 77Z" fill="url(#pin)" stroke="#fff" strokeWidth="4" />
      <path d="M151 189H363V213H313V291H327V225H360L392 255L415 263Q423 267 423 277V288H428V303H151ZM337 231V256H383L357 231Z" fill="#fff" fillRule="evenodd" />
      <circle cx="225" cy="305" r="20" fill="#9cca3e" />
      <circle cx="376" cy="305" r="20" fill="#9cca3e" />
      <circle cx="225" cy="306" r="15" fill="#fff" />
      <circle cx="376" cy="306" r="15" fill="#fff" />
    </g>
  );
}

const MapCanvas = styled.svg`
  display: block;
`;

function RegionMap() {
  return (
    <MapCanvas width="1438" height="1758" viewBox="0 0 1438 1758">
      <defs>
        <linearGradient id="pin" x1="0" y1="0" x2="0" y2="1">
          <stop offset="0" stopColor="#adcf50" />
          <stop offset="1" stopColor="#84c02a" />
        </linearGradient>
        <linearGradient id="shade" x1="0" y1="0" x2="0" y2="1">
          <stop offset="0" stopColor="#000" stopOpacity="0.12" />
          <stop offset="1" stopColor="#000" stopOpacity="0" />
        </linearGradient>
      </defs>
      {LAYERS.map((layer, i) => (
        <g key={i}>
          {TILES.map((t, j) => (
            <g key={j} transform={`translate(${t.x} ${t.y}) scale(${SX} ${SY})`}>
              {layer.width
                ? <Road d={toPath(t[layer.key], false)} $color={layer.color} $width={layer.width} />
                : <Area d={toPath(t[layer.key], true)} $fill={layer.color} />}
            </g>
          ))}
        </g>
      ))}
      <rect width="720" height="18" fill="url(#shade)" />
      {PLACES.map(p => (
        <PlaceName
          key={p.text}
          x={p.x}
          y={p.y}
          textAnchor={p.anchor}
          textLength={p.w}
          lengthAdjust="spacingAndGlyphs"
          $size={p.size ?? 44}
          $color={p.color ?? '#737578'}
          $weight={p.weight ?? 400}
        >
          {p.text}
        </PlaceName>
      ))}
      {SHIELDS.map((s, i) => (
        <g key={i}>
          <rect x={s.x} y={s.y} width={s.w} height="48" rx="5" fill={s.motorway ? '#8187c9' : '#7eab5c'} />
          <ShieldText x={s.x + s.w / 2} y={s.y + 36} $motorway={s.motorway}>{s.text}</ShieldText>
        </g>
      ))}
      <VanPin />
      {HEADINGS.map((h, i) => (
        <g key={i} transform={`translate(${h.x} ${h.y})`}>
          <ellipse rx="88.5" ry="86.4" fill={h.color} />
          <Pointer points={h.head} />
          <Pointer points={h.tail} />
        </g>
      ))}
      {STARS.map((s, i) => (
        <g key={i} transform={`translate(${s.x} ${s.y})`}>
          <path
            d="M0 0L30.5 60L97 69.7L49.3 117L60 183.7L0 153L-60 183.7L-49.3 117L-97 69.7L-30.5 60Z"
            fill={s.color}
          />
          <Count x="0" y="125">{s.n}</Count>
        </g>
      ))}
    </MapCanvas>
  );
}

/* ---------- vehicle panel ---------- */

const Panel = styled.section`
  display: flex;
  flex-direction: column;
  height: 559px;
  padding: 72px 0 0 75px;
  flex: none;
`;

const Vehicle = styled.h2`
  margin: 0;
  font-size: 76px;
  line-height: 90px;
  font-weight: 700;
  color: #000;
`;

const Line = styled.p<{ $color: string; $height: number }>`
  margin: 0;
  font-size: 60.8px;
  line-height: ${p => p.$height}px;
  color: ${p => p.$color};
`;

const Location = styled.div`
  display: flex;
  align-items: center;
  height: 181px;
  padding-left: 4px;
  font-size: 68.3px;
  line-height: 80px;
  color: #000;
  white-space: nowrap;
`;

const Town = styled.strong`
  margin: 0 45px 0 69px;
  font-weight: 700;
`;

const TargetIcon = styled.svg`
  width: 70px;
  height: 70px;
  margin-bottom: 12px;
  flex: none;
`;

/* ---------- bottom bar ---------- */

const BottomBar = styled.footer`
  display: flex;
  align-items: center;
  height: 220px;
  padding-top: 2px;
  border-top: 4px solid #dedfdf;
  border-left: 2px solid #dedfdf;
  flex: none;
`;

const HomeButton = styled.div`
  display: flex;
  align-items: center;
  width: 222px;
  height: 160px;
  padding-left: 62px;
  border-right: 4px solid #dfdfdf;
`;

const Activity = styled.div`
  display: flex;
  align-items: flex-start;
  margin-left: 299px;
  gap: 22px;
  font-size: 69.8px;
  line-height: 80px;
  color: #000;
`;

const Badge = styled.span`
  display: flex;
  align-items: center;
  justify-content: center;
  width: 117px;
  height: 64px;
  margin-top: -20px;
  padding: 6px 0 0 3px;
  border-radius: 30px;
  background: #f06057;
  color: #fff;
  font-size: 48px;
  line-height: 58px;
`;

export default function App() {
  return (
    <Page>
      <GlobalStyle />
      <Phone>
        <Speaker />
        <Screen>
          <StatusBar />
          <AppBar>
            <svg width="64" height="64" viewBox="0 0 64 64" fill="none" stroke="#333" strokeWidth="8">
              <path d="M34 3L5.500 32L34 61M5 32H64" />
            </svg>
            <Title>NMW13</Title>
          </AppBar>
          <Tabs>
            <Tab $active>LOAD MATCHES</Tab>
            <Tab>WHO’S NEARBY</Tab>
          </Tabs>
          <MapView>
            <RegionMap />
          </MapView>
          <Panel>
            <Vehicle>NMW13</Vehicle>
            <Line $color="#a5a5a5" $height={93}>Luton</Line>
            <Location>
              <TargetIcon viewBox="-35 -35 70 70">
                <path d="M0 -35V-25M0 25V35M-35 0H-25M25 0H35" stroke="#bdb8bb" strokeWidth="6" />
                <circle r="25" fill="none" stroke="#bdb8bb" strokeWidth="6" />
                <circle r="12" fill="#bdb8bb" />
              </TargetIcon>
              <Town>BARROW UPON TRENT DE73</Town>
              <span>09:37</span>
            </Location>
            <Line $color="#55d83f" $height={65}>Waiting for next job</Line>
          </Panel>
          <BottomBar>
            <HomeButton>
              <svg width="92" height="88" viewBox="0 0 275 264">
                <path d="M137 0L193 58V12H224V92L275 147H245V264H163V180H112V264H30V147H0Z" fill="#000" />
              </svg>
            </HomeButton>
            <Activity>
              New Activity
              <Badge>154</Badge>
            </Activity>
          </BottomBar>
        </Screen>
      </Phone>
    </Page>
  );
}
